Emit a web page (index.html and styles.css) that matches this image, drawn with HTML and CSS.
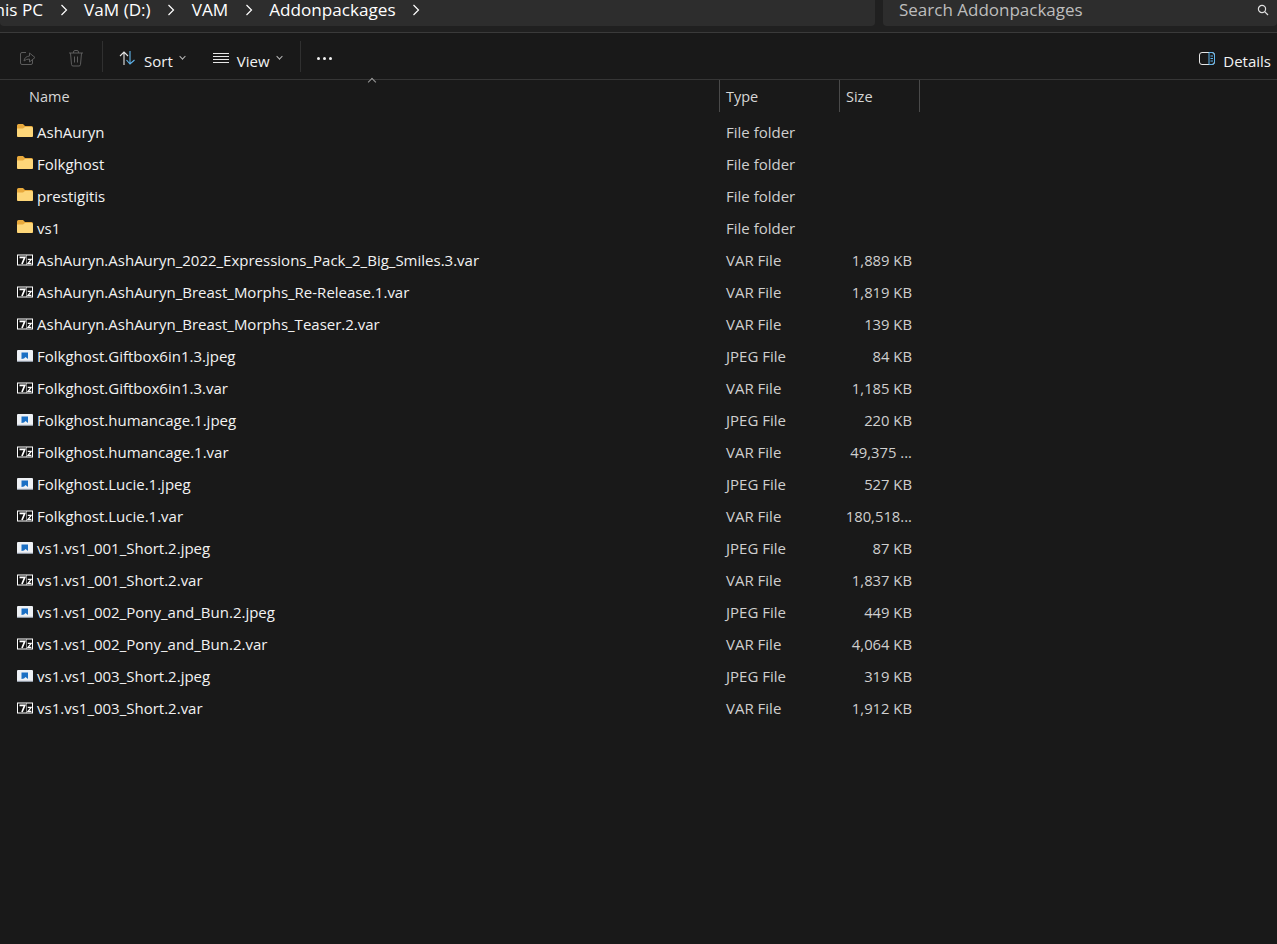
FILE: index.html
```html
<!DOCTYPE html>
<html lang="en">
<head>
  <meta charset="UTF-8" />
  <title>Addonpackages</title>
  <link rel="stylesheet" href="styles.css">
</head>
<body>
  <svg class="defs" width="0" height="0">
    <symbol id="ic-folder" viewBox="0 0 16 16">
      <path d="M0 2.5Q0 1 1.5 1H6L8 3H14.5Q16 3 16 4.500V12.500Q16 14 14.500 14H1.500Q0 14 0 12.500Z" fill="#e8a93c"/>
      <path d="M0 5.500L6 5.500L8 4H14.500Q16 4 16 5.500V12.500Q16 14 14.500 14H1.500Q0 14 0 12.500Z" fill="#fdd679"/>
    </symbol>
    <symbol id="ic-var" viewBox="0 -3.500 16 16">
      <rect x="0" y="0" width="16" height="11" fill="#fff"/>
      <rect x="1" y="1" width="8.500" height="9" fill="#111"/>
      <rect x="10" y="1" width="5" height="9" fill="#111"/>
      <path d="M2.500 2.800H7.800L5 9.500" fill="none" stroke="#fff" stroke-width="1.700"/>
      <path d="M10.800 4.800H14.200L11 8.800H14.400" fill="none" stroke="#fff" stroke-width="1.200"/>
    </symbol>
    <symbol id="ic-jpeg" viewBox="0 -3 16 16">
      <rect x="0" y="0" width="16" height="12" rx="1" fill="#eef1f5"/>
      <rect x="0" y="10.800" width="16" height="1.200" fill="#8f98a3"/>
      <path d="M4.500 2.500H11V9L8.500 7L7 8.500L4.500 9Z" fill="#1a6fc4"/>
    </symbol>
  </svg>

  <header class="topbar">
    <nav class="address">
      <span class="crumb crumb-first">This PC</span>
      <svg class="chev" width="8" height="12" viewBox="0 0 8 12"><path d="M1.500 1L6.500 6L1.500 11" fill="none" stroke="#fff" stroke-width="1.200"/></svg>
      <span class="crumb">VaM (D:)</span>
      <svg class="chev" width="8" height="12" viewBox="0 0 8 12"><path d="M1.500 1L6.500 6L1.500 11" fill="none" stroke="#fff" stroke-width="1.200"/></svg>
      <span class="crumb">VAM</span>
      <svg class="chev" width="8" height="12" viewBox="0 0 8 12"><path d="M1.500 1L6.500 6L1.500 11" fill="none" stroke="#fff" stroke-width="1.200"/></svg>
      <span class="crumb">Addonpackages</span>
      <svg class="chev" width="8" height="12" viewBox="0 0 8 12"><path d="M1.500 1L6.500 6L1.500 11" fill="none" stroke="#fff" stroke-width="1.200"/></svg>
    </nav>
    <div class="search">
      <span>Search Addonpackages</span>
      <svg class="search-icon" width="12" height="12" viewBox="0 0 12 12">
        <circle cx="5" cy="5" r="3.600" fill="none" stroke="#e0e0e0" stroke-width="1.200"/>
        <path d="M7.700 7.700L11 11" stroke="#e0e0e0" stroke-width="1.200"/>
      </svg>
    </div>
  </header>

  <div class="toolbar">
    <div class="tool tool-share">
      <svg width="16" height="16" viewBox="0 0 16 16" fill="none" stroke="#5c5c5c" stroke-width="1">
        <path d="M6 2.500H2Q.5 2.500 .5 4V13Q.5 14.500 2 14.500H11Q12.500 14.500 12.500 13V10"/>
        <path d="M4 11Q4.500 6.500 9.500 6V3L15 7.500L9.500 12V9Q6 9 4 11Z"/>
      </svg>
    </div>
    <div class="tool tool-trash">
      <svg width="16" height="17" viewBox="0 0 16 17" fill="none" stroke="#5c5c5c" stroke-width="1">
        <path d="M1 3H15M5.500 3V2Q5.500 .5 7 .5H9Q10.500 .5 10.500 2V3M2.500 3L3.500 14.500Q3.600 16 5 16H11Q12.400 16 12.500 14.500L13.500 3M6.500 6.500V12.500M9.500 6.500V12.500"/>
      </svg>
    </div>
    <div class="sep sep-a"></div>
    <div class="tool tool-sort">
      <svg width="17" height="14" viewBox="0 0 17 14" fill="none" stroke-width="1.100">
        <path d="M5 14V1M1 5L5 1L9 5" stroke="#e6e6e6"/>
        <path d="M11 0V13M7.500 9L11 13L15.500 9" stroke="#5fb4ec"/>
      </svg>
      <span class="tool-label">Sort</span>
      <span class="caret"></span>
    </div>
    <div class="tool tool-view">
      <svg width="16" height="11" viewBox="0 0 16 11" stroke="#e6e6e6" stroke-width="1">
        <path d="M0 .5H16M0 3.500H16M0 6.500H16M0 9.500H16"/>
      </svg>
      <span class="tool-label">View</span>
      <span class="caret"></span>
    </div>
    <div class="sep sep-b"></div>
    <div class="more"><i></i><i></i><i></i></div>
    <div class="tool tool-details">
      <svg width="16" height="13" viewBox="0 0 16 13" fill="none">
        <rect x=".5" y=".5" width="15" height="12" rx="2.500" stroke="#e6e6e6"/>
        <path d="M10 .5H13Q15.500 .5 15.500 3V10Q15.500 12.500 13 12.500H10Z" stroke="#5fb4ec"/>
        <path d="M11.500 4H14M11.500 6.500H14M11.500 9H14" stroke="#5fb4ec"/>
      </svg>
      <span class="tool-label">Details</span>
    </div>
  </div>

  <main class="files">
    <div class="row head">
      <div class="cell name-head">Name<span class="sort-mark"></span></div>
      <div class="cell cell-col">Type</div>
      <div class="cell cell-col">Size</div>
    </div>

    <div class="row"><div class="cell name"><svg class="ic"><use href="#ic-folder"/></svg>AshAuryn</div><div class="cell type">File folder</div><div class="cell size"></div></div>
    <div class="row"><div class="cell name"><svg class="ic"><use href="#ic-folder"/></svg>Folkghost</div><div class="cell type">File folder</div><div class="cell size"></div></div>
    <div class="row"><div class="cell name"><svg class="ic"><use href="#ic-folder"/></svg>prestigitis</div><div class="cell type">File folder</div><div class="cell size"></div></div>
    <div class="row"><div class="cell name"><svg class="ic"><use href="#ic-folder"/></svg>vs1</div><div class="cell type">File folder</div><div class="cell size"></div></div>
    <div class="row"><div class="cell name"><svg class="ic"><use href="#ic-var"/></svg>AshAuryn.AshAuryn_2022_Expressions_Pack_2_Big_Smiles.3.var</div><div class="cell type">VAR File</div><div class="cell size">1,889 KB</div></div>
    <div class="row"><div class="cell name"><svg class="ic"><use href="#ic-var"/></svg>AshAuryn.AshAuryn_Breast_Morphs_Re-Release.1.var</div><div class="cell type">VAR File</div><div class="cell size">1,819 KB</div></div>
    <div class="row"><div class="cell name"><svg class="ic"><use href="#ic-var"/></svg>AshAuryn.AshAuryn_Breast_Morphs_Teaser.2.var</div><div class="cell type">VAR File</div><div class="cell size">139 KB</div></div>
    <div class="row"><div class="cell name"><svg class="ic"><use href="#ic-jpeg"/></svg>Folkghost.Giftbox6in1.3.jpeg</div><div class="cell type">JPEG File</div><div class="cell size">84 KB</div></div>
    <div class="row"><div class="cell name"><svg class="ic"><use href="#ic-var"/></svg>Folkghost.Giftbox6in1.3.var</div><div class="cell type">VAR File</div><div class="cell size">1,185 KB</div></div>
    <div class="row"><div class="cell name"><svg class="ic"><use href="#ic-jpeg"/></svg>Folkghost.humancage.1.jpeg</div><div class="cell type">JPEG File</div><div class="cell size">220 KB</div></div>
    <div class="row"><div class="cell name"><svg class="ic"><use href="#ic-var"/></svg>Folkghost.humancage.1.var</div><div class="cell type">VAR File</div><div class="cell size">49,375 ...</div></div>
    <div class="row"><div class="cell name"><svg class="ic"><use href="#ic-jpeg"/></svg>Folkghost.Lucie.1.jpeg</div><div class="cell type">JPEG File</div><div class="cell size">527 KB</div></div>
    <div class="row"><div class="cell name"><svg class="ic"><use href="#ic-var"/></svg>Folkghost.Lucie.1.var</div><div class="cell type">VAR File</div><div class="cell size">180,518...</div></div>
    <div class="row"><div class="cell name"><svg class="ic"><use href="#ic-jpeg"/></svg>vs1.vs1_001_Short.2.jpeg</div><div class="cell type">JPEG File</div><div class="cell size">87 KB</div></div>
    <div class="row"><div class="cell name"><svg class="ic"><use href="#ic-var"/></svg>vs1.vs1_001_Short.2.var</div><div class="cell type">VAR File</div><div class="cell size">1,837 KB</div></div>
    <div class="row"><div class="cell name"><svg class="ic"><use href="#ic-jpeg"/></svg>vs1.vs1_002_Pony_and_Bun.2.jpeg</div><div class="cell type">JPEG File</div><div class="cell size">449 KB</div></div>
    <div class="row"><div class="cell name"><svg class="ic"><use href="#ic-var"/></svg>vs1.vs1_002_Pony_and_Bun.2.var</div><div class="cell type">VAR File</div><div class="cell size">4,064 KB</div></div>
    <div class="row"><div class="cell name"><svg class="ic"><use href="#ic-jpeg"/></svg>vs1.vs1_003_Short.2.jpeg</div><div class="cell type">JPEG File</div><div class="cell size">319 KB</div></div>
    <div class="row"><div class="cell name"><svg class="ic"><use href="#ic-var"/></svg>vs1.vs1_003_Short.2.var</div><div class="cell type">VAR File</div><div class="cell size">1,912 KB</div></div>
  </main>
</body>
</html>
```

FILE: styles.css
```css
/* page */
html, body {
  height: 100%;
}

body {
  margin: 0;
  overflow: hidden;
  background-color: #191919;
  color: #f0f0f0;
  font-family: "Open Sans", "Noto Sans", sans-serif;
  font-size: 14px;
}

.defs {
  display: block;
  height: 0;
}

/* address bar + search */
.topbar {
  display: flex;
  gap: 8px;
  height: 33px;
  box-sizing: border-box;
  padding-bottom: 6px;
  background-color: #202020;
  border-bottom: 1px solid #3a3a3a;
}

.address, .search {
  display: flex;
  align-items: center;
  background-color: #2d2d2d;
  border-radius: 0 0 4px 4px;
  font-size: 17px;
  line-height: 18px;
  white-space: nowrap;
  padding-bottom: 7px;
}

.address {
  flex: none;
  width: 875px;
  color: #fff;
  font-size: 17.150px;
}

.crumb-first {
  margin-left: -15px;
}

.chev {
  flex: none;
  margin: 0 16.500px;
}

.search {
  flex: 1;
  justify-content: space-between;
  padding-left: 16px;
  padding-right: 8px;
  color: #bdbdbd;
}

/* command bar */
.toolbar {
  display: flex;
  align-items: center;
  height: 47px;
  box-sizing: border-box;
  padding-top: 4px;
  border-bottom: 1px solid #363636;
  color: #f2f2f2;
}

.tool {
  display: flex;
  align-items: center;
}

.tool-share {
  margin-left: 20px;
}

.tool-trash {
  margin-left: 32px;
}

.tool-sort {
  margin-left: 16px;
}

.tool-view {
  margin-left: 28px;
}

.tool-details {
  margin-left: auto;
  margin-right: 6px;
}

.tool-label {
  margin-left: 8px;
  font-size: 15px;
  padding-top: 5px;
}

.caret {
  width: 4px;
  height: 4px;
  margin: 0 0 4px 7px;
  border-right: 1px solid #bbb;
  border-bottom: 1px solid #bbb;
  transform: rotate(45deg) scale(.9);
}

.sep {
  width: 1px;
  height: 31px;
  margin-top: -4px;
  background-color: #303030;
}

.sep-a {
  margin-left: 18px;
}

.sep-b {
  margin-left: 18px;
}

.more {
  display: flex;
  gap: 3px;
  margin-left: 16px;
  margin-top: 1px;
}

.more i {
  width: 3px;
  height: 3px;
  border-radius: 50%;
  background-color: #f2f2f2;
}

/* file list */
.row {
  display: grid;
  grid-template-columns: 720px 120px 80px;
  height: 32px;
  align-items: center;
  font-size: 15px;
}

.cell {
  white-space: nowrap;
}

.name {
  display: flex;
  align-items: center;
  padding-left: 17px;
  color: #f2f2f2;
}

.ic {
  width: 16px;
  height: 16px;
  margin-right: 4px;
  margin-top: -3px;
  flex: none;
}

.type {
  padding-left: 6px;
  color: #cfcfcf;
}

.size {
  padding-right: 8px;
  text-align: right;
  font-size: 14.800px;
  color: #cfcfcf;
}

.head {
  height: 32px;
  margin-bottom: 4px;
  font-size: 14.500px;
  color: #d6d6d6;
}

.name-head {
  position: relative;
  padding-left: 29px;
}

.sort-mark {
  position: absolute;
  left: 369px;
  top: -8px;
  width: 5px;
  height: 5px;
  border-left: 1px solid #999;
  border-top: 1px solid #999;
  transform: rotate(45deg);
}

.cell-col {
  height: 32px;
  line-height: 33px;
  margin-left: -1px;
  padding-left: 6px;
  border-left: 1px solid #4a4a4a;
  box-sizing: border-box;
}

.cell-col:last-child {
  border-right: 1px solid #4a4a4a;
}
```
